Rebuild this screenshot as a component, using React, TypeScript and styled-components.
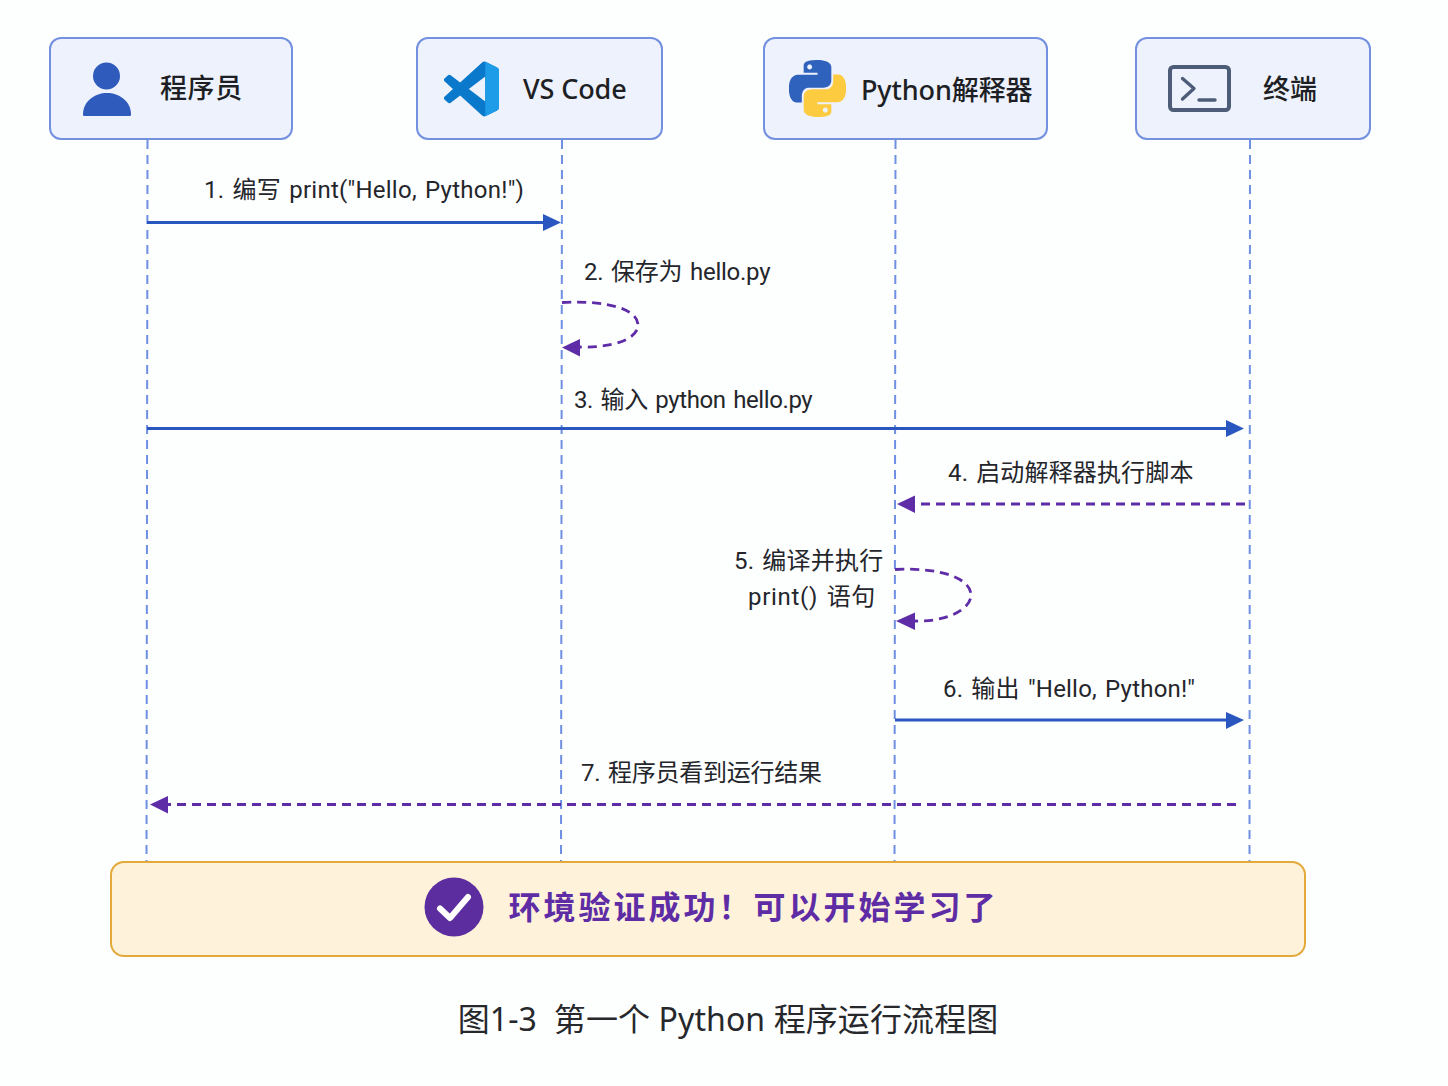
import React from "react";
import styled, { createGlobalStyle } from "styled-components";

const Global = createGlobalStyle`
  html, body { margin: 0; padding: 0; background: #fdfefe; }
  body { font-family: "Noto Sans", "Noto Sans CJK SC", sans-serif; }
`;

const Page = styled.div`
  width: 1448px;
  height: 1086px;
  overflow: hidden;
  display: flex;
  flex-direction: column;
  background: #fdfefe;
`;

const Header = styled.header`
  display: flex;
  padding: 37px 0 0 49px;
  height: 103px;
`;

const Card = styled.div<{ $w: number; $ml: number; $pl: number; $gap: number }>`
  box-sizing: border-box;
  width: ${(p) => p.$w}px;
  height: 103px;
  margin-left: ${(p) => p.$ml}px;
  padding-left: ${(p) => p.$pl}px;
  display: flex;
  align-items: center;
  gap: ${(p) => p.$gap}px;
  background: #eef2fc;
  border: 2px solid #7391df;
  border-radius: 12px;
`;

const CardLabel = styled.span<{ $lift?: number; $track?: number }>`
  font-size: 27px;
  font-weight: 500;
  color: #1d1f24;
  white-space: nowrap;
  letter-spacing: ${(p) => p.$track ?? -0.1}px;
  margin-bottom: ${(p) => p.$lift ?? 0}px;
`;

const Diagram = styled.section`
  position: relative;
  width: 1448px;
  height: 721px;
`;

const Wires = styled.svg`
  position: absolute;
  left: 0;
  top: 0;
`;

const Message = styled.span<{ $x: number; $y: number; $track: number }>`
  position: absolute;
  left: ${(p) => p.$x}px;
  top: ${(p) => p.$y - 140}px;
  transform: translateY(-50%);
  font-family: Roboto, "Noto Sans CJK SC", sans-serif;
  font-size: 24px;
  line-height: 30px;
  color: #24262b;
  white-space: pre;
  word-spacing: 2px;
  letter-spacing: ${(p) => p.$track}px;
`;

const Banner = styled.div`
  box-sizing: border-box;
  width: 1196px;
  height: 96px;
  margin-left: 110px;
  padding: 0 0 4px 7px;
  display: flex;
  align-items: center;
  justify-content: center;
  gap: 24px;
  background: #fef3da;
  border: 2px solid #e3a93a;
  border-radius: 14px;
`;

const BannerText = styled.span`
  font-size: 32px;
  font-weight: 700;
  letter-spacing: 3px;
  color: #5e2ca5;
  white-space: nowrap;
  margin-bottom: 4px;
`;

const Caption = styled.div`
  margin-top: 40px;
  padding-left: 8px;
  text-align: center;
  font-size: 32px;
  line-height: 44px;
  letter-spacing: 0.1px;
  color: #26282c;
  white-space: pre;
`;

const PersonIcon = () => (
  <svg width="48" height="54" viewBox="83 61 48 54">
    <ellipse cx="106.5" cy="75" rx="13.5" ry="13.5" fill="#2f5bbd" />
    <path d="M83 113.5C83 100 95 92 107 92s24 8 24 21.5c0 1-.6 1.5-1.5 1.5h-45c-.9 0-1.500-.5-1.500-1.500z" fill="#2f5bbd" />
  </svg>
);

const VsCodeIcon = () => (
  <svg width="55" height="56" viewBox="0 0 24 24">
    <path
      d="M23.15 2.587L18.21.21a1.494 1.494 0 0 0-1.705.29l-9.46 8.63-4.12-3.128a.999.999 0 0 0-1.276.057L.327 7.261A1 1 0 0 0 .326 8.74L3.899 12 .326 15.26a1 1 0 0 0 .001 1.479L1.65 17.94a.999.999 0 0 0 1.276.057l4.12-3.128 9.46 8.63a1.492 1.492 0 0 0 1.704.29l4.942-2.377A1.5 1.5 0 0 0 24 20.06V3.939a1.5 1.500 0 0 0-.85-1.352zm-5.146 14.861L10.826 12l7.178-5.448v10.896z"
      fill="#0a79cb"
    />
    <path
      d="M18.004 0.05L23.15 2.587A1.5 1.5 0 0 1 24 3.939V20.06a1.5 1.5 0 0 1-.85 1.352l-4.94 2.377a1.490 1.490 0 0 1-.206.08V17.448V6.552z"
      fill="#1e9ce8"
    />
  </svg>
);

const PythonIcon = () => (
  <svg width="57" height="57" viewBox="0 0 24 24">
    <path
      fillRule="evenodd"
      fill="#2f62bd"
      d="M14.25.18l.9.2.73.26.59.3.45.32.34.34.25.34.16.33.1.3.04.26.02.2-.01.13V8.500l-.05.63-.13.55-.21.46-.26.38-.3.31-.33.25-.35.19-.35.14-.33.1-.3.07-.26.04-.21.02H8.770l-.69.05-.59.14-.5.22-.41.27-.33.32-.27.35-.2.36-.15.37-.1.35-.07.32-.04.27-.02.21v3.060H3.170l-.21-.03-.28-.07-.32-.12-.35-.18-.36-.26-.36-.36-.35-.46-.32-.59-.28-.73-.21-.88-.14-1.050-.05-1.230.06-1.220.16-1.040.24-.87.32-.71.36-.57.4-.44.42-.33.42-.24.4-.16.36-.1.32-.05.24-.01h.16l.06.01h8.160v-.83H6.180l-.01-2.750-.02-.37.05-.34.11-.31.17-.28.25-.26.31-.23.38-.2.44-.18.51-.15.58-.12.64-.1.71-.06.77-.04.84-.02 1.270.05zm-6.300 1.980l-.23.33-.08.41.08.41.23.34.33.22.41.09.41-.09.33-.22.23-.34.08-.41-.08-.41-.23-.33-.33-.22-.41-.09-.41.09z"
    />
    <path
      fillRule="evenodd"
      fill="#fdcb3f"
      d="M21.040 6.110l.28.06.32.12.35.18.36.27.36.35.35.47.32.59.28.73.21.88.14 1.040.05 1.230-.06 1.230-.16 1.040-.24.86-.32.71-.36.57-.4.45-.42.33-.42.24-.4.16-.36.09-.32.05-.24.02-.16-.01h-8.220v.82h5.840l.01 2.760.02.36-.05.34-.11.31-.17.29-.25.25-.31.24-.38.2-.44.17-.51.15-.58.13-.64.09-.71.07-.77.04-.84.01-1.270-.04-1.070-.14-.9-.2-.73-.25-.59-.3-.45-.33-.34-.34-.25-.34-.16-.33-.1-.3-.04-.25-.02-.2.01-.13v-5.340l.05-.64.13-.54.21-.46.26-.38.3-.32.33-.24.35-.2.35-.14.33-.1.3-.06.26-.04.21-.02.13-.01h5.840l.69-.05.59-.14.5-.21.41-.28.33-.32.27-.35.2-.36.15-.36.1-.35.07-.32.04-.28.02-.21V6.070h2.090l.14.01zm-6.470 14.250l-.23.33-.08.41.08.41.23.33.33.23.41.08.41-.08.33-.23.23-.33.08-.41-.08-.41-.23-.33-.33-.23-.41-.08-.41.08z"
    />
  </svg>
);

const TerminalIcon = () => (
  <svg width="63" height="47" viewBox="0 0 63 47">
    <rect x="2" y="2" width="59" height="43" rx="3.500" fill="none" stroke="#4d5d78" strokeWidth="4" />
    <path d="M14.500 13.500L26 23.500L14.500 34" fill="none" stroke="#4d5d78" strokeWidth="3.400" strokeLinecap="round" strokeLinejoin="round" />
    <path d="M31 35H47" fill="none" stroke="#4d5d78" strokeWidth="3.400" strokeLinecap="round" />
  </svg>
);

const CheckIcon = () => (
  <svg width="60" height="60" viewBox="0 0 60 60">
    <circle cx="30" cy="30" r="29.500" fill="#5b2d9e" />
    <path d="M16 31.500L26 41L44 20" fill="none" stroke="#fff" strokeWidth="6" strokeLinecap="round" strokeLinejoin="round" />
  </svg>
);

const lifelines: [number, number][] = [
  [147.5, 146.5],
  [562, 561],
  [895.5, 894.5],
  [1250, 1249.5],
];

const BLUE = "#2a57bf";
const PURPLE = "#5f2ca8";

const messages: { x: number; y: number; track: number; text: string }[] = [
  { x: 204, y: 190, track: 0.25, text: '1. 编写 print("Hello, Python!")' },
  { x: 584, y: 272, track: -0.25, text: "2. 保存为 hello.py" },
  { x: 574, y: 400, track: -0.4, text: "3. 输入 python hello.py" },
  { x: 948, y: 473, track: 0.15, text: "4. 启动解释器执行脚本" },
  { x: 734, y: 561, track: 0.2, text: "5. 编译并执行" },
  { x: 748, y: 597, track: 0.7, text: "print() 语句" },
  { x: 943, y: 689, track: 0.2, text: '6. 输出 "Hello, Python!"' },
  { x: 581, y: 773, track: -0.25, text: "7. 程序员看到运行结果" },
];

export default function App() {
  return (
    <Page>
      <Global />
      <Header>
        <Card $w={243.5} $ml={0} $pl={32} $gap={29}>
          <PersonIcon />
          <CardLabel $lift={5} $track={0.6}>程序员</CardLabel>
        </Card>
        <Card $w={246.5} $ml={123.5} $pl={26} $gap={24}>
          <VsCodeIcon />
          <CardLabel>VS Code</CardLabel>
        </Card>
        <Card $w={284.5} $ml={100.5} $pl={24} $gap={15}>
          <PythonIcon />
          <CardLabel>Python解释器</CardLabel>
        </Card>
        <Card $w={235.5} $ml={87.5} $pl={31} $gap={32}>
          <TerminalIcon />
          <CardLabel $lift={2}>终端</CardLabel>
        </Card>
      </Header>
      <Diagram>
        <Wires width="1448" height="721" viewBox="0 140 1448 721">
          {lifelines.map(([a, b]) => (
            <line key={a} x1={a} y1={140} x2={b} y2={861} stroke="#6f8fe2" strokeWidth="2" strokeDasharray="9 6" />
          ))}
          <g stroke={BLUE} strokeWidth="3" fill="none">
            <path d="M147 222.500H545" />
            <path d="M147 428.500H1228" />
            <path d="M895 720H1228" />
          </g>
          <g fill={BLUE}>
            <path d="M543 214L561 222.500L543 231z" />
            <path d="M1226 420L1244 428.500L1226 437z" />
            <path d="M1226 712L1244 720L1226 729z" />
          </g>
          <g stroke={PURPLE} strokeWidth="2.800" fill="none" strokeDasharray="9 6">
            <path d="M562 302.500C610 300 638 310 638 325C638 340 610 348 580 347" />
            <path d="M1245 504H915" />
            <path d="M895 569.500C945 567 971 580 971 595C971 610 945 622 915 621" />
            <path d="M1236 804.500H168" />
          </g>
          <g fill={PURPLE}>
            <path d="M562 347.500L580 339L580 356.500z" />
            <path d="M897 504L915 495.500L915 513z" />
            <path d="M896 621L915 612.500L915 630z" />
            <path d="M150 804.500L168 796L168 813.500z" />
          </g>
        </Wires>
        {messages.map((m) => (
          <Message key={m.text} $x={m.x} $y={m.y} $track={m.track}>
            {m.text}
          </Message>
        ))}
      </Diagram>
      <Banner>
        <CheckIcon />
        <BannerText>{"环境验证成功\uFF01可以开始学习了"}</BannerText>
      </Banner>
      <Caption>{"图1-3  第一个 Python 程序运行流程图"}</Caption>
    </Page>
  );
}
